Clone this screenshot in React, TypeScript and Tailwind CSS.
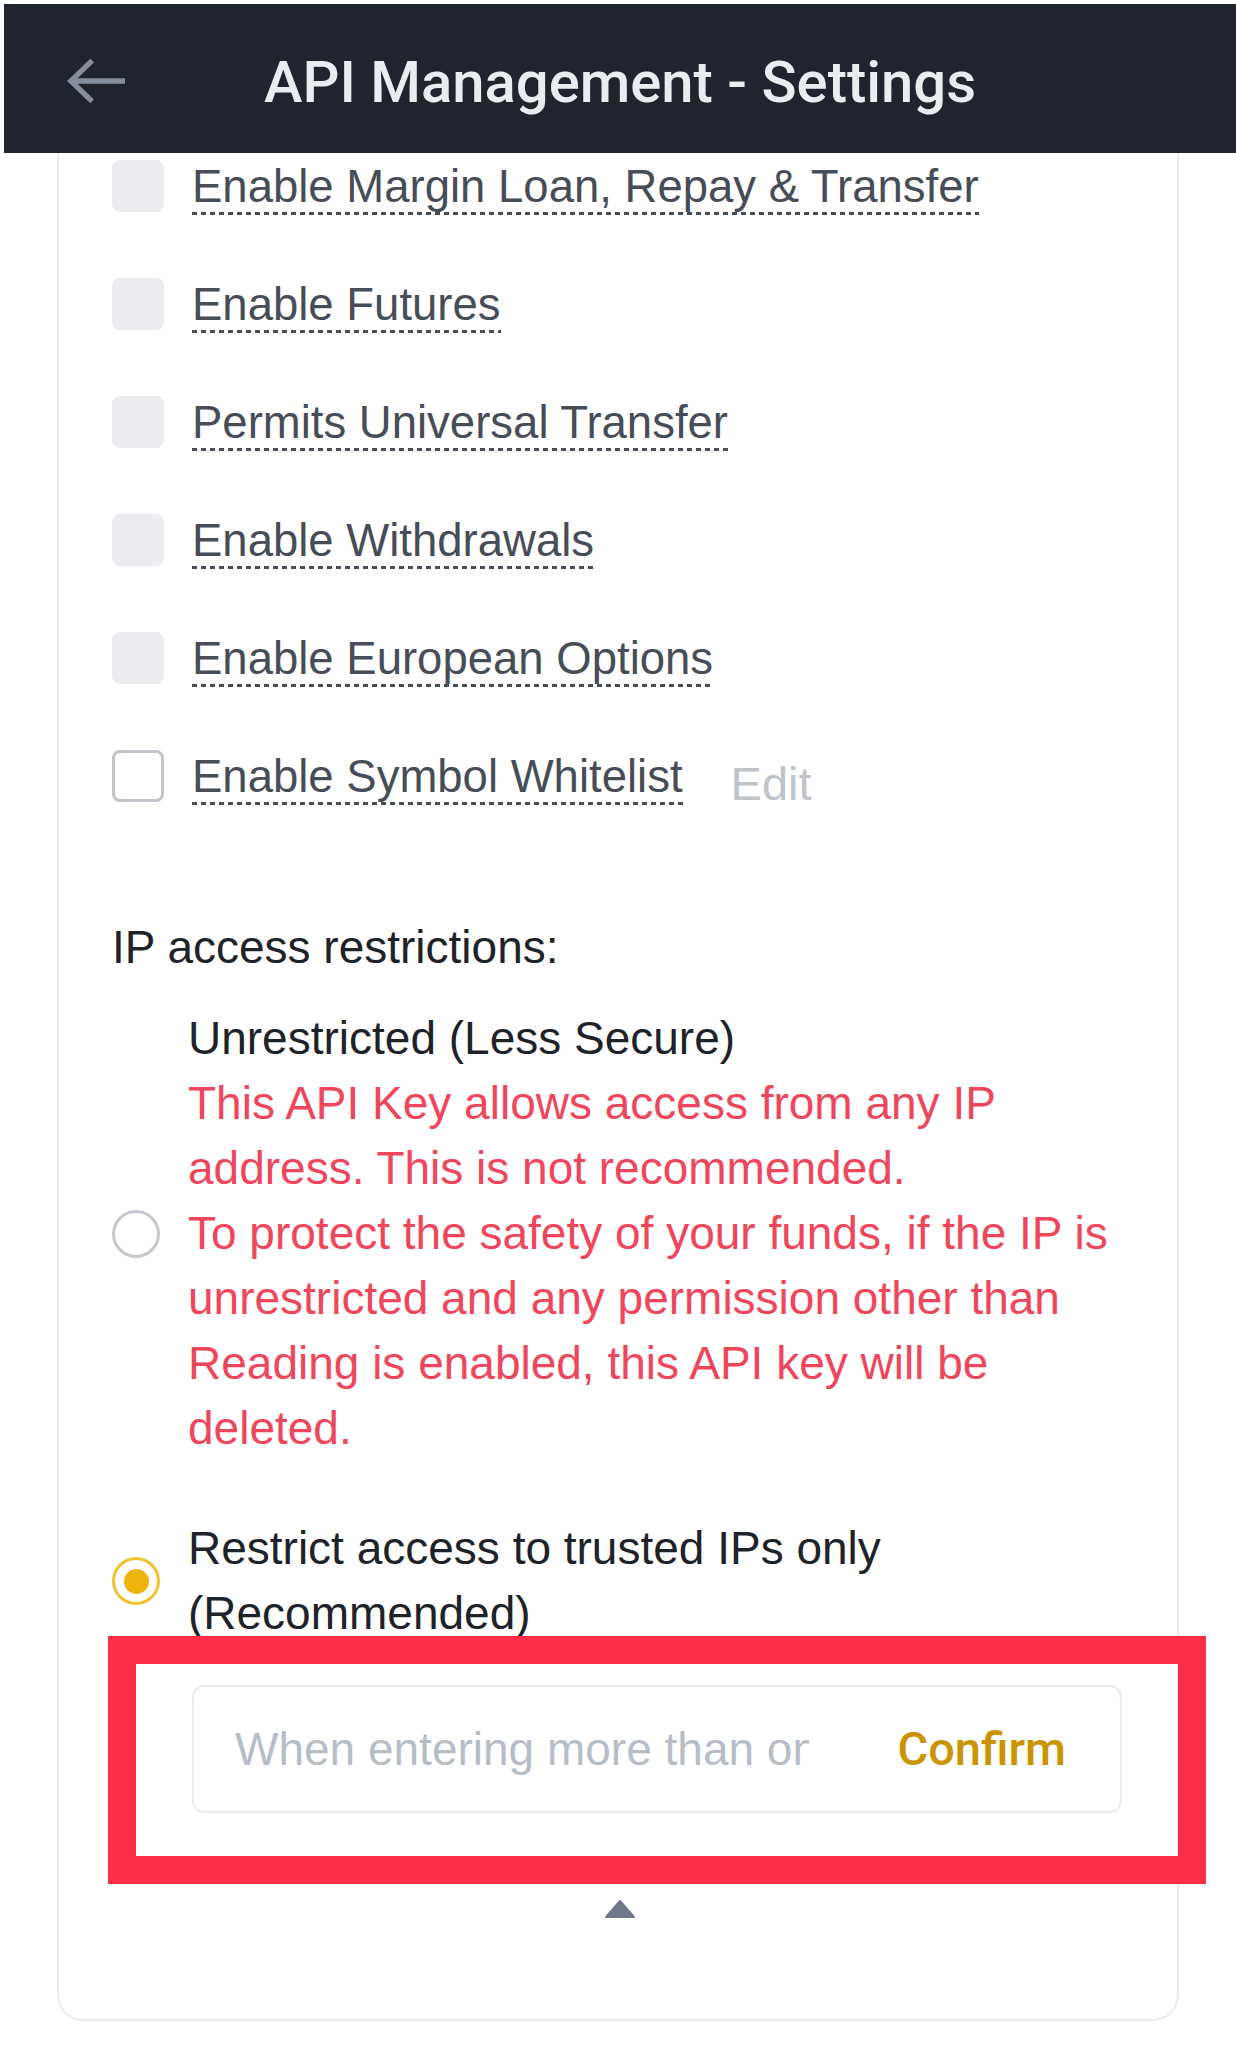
import React from 'react';

const bodyFont = "font-['Liberation_Sans',Arial,sans-serif]";

const permissions = [
  { label: 'Enable Margin Loan, Repay & Transfer', locked: true },
  { label: 'Enable Futures', locked: true },
  { label: 'Permits Universal Transfer', locked: true },
  { label: 'Enable Withdrawals', locked: true },
  { label: 'Enable European Options', locked: true },
  { label: 'Enable Symbol Whitelist', locked: false, edit: true },
];

const Checkbox: React.FC<{ locked: boolean }> = ({ locked }) =>
  locked ? (
    <span className="block h-[52px] w-[52px] shrink-0 rounded-[8px] bg-[#eaecef]" />
  ) : (
    <span className="block h-[52px] w-[52px] shrink-0 rounded-[8px] border-[3px] border-[#c1c5cc] bg-white" />
  );

const Radio: React.FC<{ checked: boolean }> = ({ checked }) =>
  checked ? (
    <span className="flex h-[48px] w-[48px] shrink-0 items-center justify-center rounded-full border-[3px] border-[#f0c232]">
      <span className="block h-[25px] w-[25px] rounded-full bg-[#edb40c]" />
    </span>
  ) : (
    <span className="block h-[48px] w-[48px] shrink-0 rounded-full border-[3px] border-[#c5c8ce]" />
  );

export default function App() {
  return (
    <div className={`h-[2072px] w-[1236px] overflow-hidden bg-white pt-[4px] ${bodyFont}`}>
      {/* top bar */}
      <header className="relative z-10 ml-[4px] flex h-[149px] items-center bg-[#20242e]">
        <div className="flex w-[122px] pl-[62px] pt-[4px]">
          <svg width="62" height="48" viewBox="0 0 62 48" fill="none">
            <path d="M61 24H5M27 3L5 24L27 45" stroke="#848e9c" strokeWidth="5.5" />
          </svg>
        </div>
        <h1 className="flex-1 pt-[6px] text-center font-['Roboto',sans-serif] text-[58px] font-medium leading-none text-[#eaecef]">
          API Management - Settings
        </h1>
        <div className="w-[122px]" />
      </header>

      {/* card (scrolled under the bar) */}
      <main className="-mt-[26px] ml-[57px] w-[1122px] rounded-b-[26px] border-2 border-t-0 border-[#eaecef] pb-[101px] pl-[53px] pr-[55px]">
        {permissions.map((p) => (
          <div key={p.label} className="flex h-[118px] items-center">
            <Checkbox locked={p.locked} />
            <span className="ml-[28px] mt-[4px] bg-[linear-gradient(to_right,#474d57_60%,transparent_60%)] bg-[length:9px_3px] bg-[position:left_bottom] bg-repeat-x pb-[3px] text-[45.5px] leading-[51px] text-[#474d57]">
              {p.label}
            </span>
            {p.edit && (
              <span className="ml-[48px] mt-[15px] text-[47px] leading-[52px] text-[#bfc3ca]">Edit</span>
            )}
          </div>
        ))}

        <p className="mt-[80px] text-[46px] leading-[65px] text-[#1e2329]">IP access restrictions:</p>

        <div className="mt-[26px] flex items-center">
          <Radio checked={false} />
          <div className="ml-[28px] text-[46px] leading-[65px]">
            <p className="text-[#1e2329]">Unrestricted (Less Secure)</p>
            <p className="text-[#f0465c]">This API Key allows access from any IP address. This is not recommended.</p>
            <p className="text-[#f0465c]">
              To protect the safety of your funds, if the IP is unrestricted and any permission other than Reading is
              enabled, this API key will be deleted.
            </p>
          </div>
        </div>

        <div className="mt-[55px] flex items-center">
          <Radio checked />
          <p className="ml-[28px] text-[46px] leading-[65px] text-[#1e2329]">
            Restrict access to trusted IPs only (Recommended)
          </p>
        </div>

        <div className="relative ml-[80px] mt-[39px]">
          <div className="flex h-[128px] items-center rounded-[12px] border-2 border-[#eaecef] pl-[41px] pr-[54px]">
            <input
              readOnly
              placeholder="When entering more than one IP address, please separate them with spaces"
              className="w-[574px] bg-transparent text-[46px] text-[#1e2329] outline-none placeholder:text-[#b7bdc6]"
            />
            <button className="ml-auto font-['Roboto',sans-serif] text-[47px] font-medium text-[#c99400]">Confirm</button>
          </div>
          <div className="pointer-events-none absolute -bottom-[71px] -left-[84px] -right-[84px] -top-[49px] border-[28px] border-[#fe2e46]" />
        </div>

        <div className="mt-[86px] flex justify-center pl-[6px]">
          <svg width="32" height="19" viewBox="0 0 32 19">
            <path d="M16 2L30 18H2Z" fill="#707a8a" stroke="#707a8a" strokeWidth="2" strokeLinejoin="round" />
          </svg>
        </div>
      </main>
    </div>
  );
}
